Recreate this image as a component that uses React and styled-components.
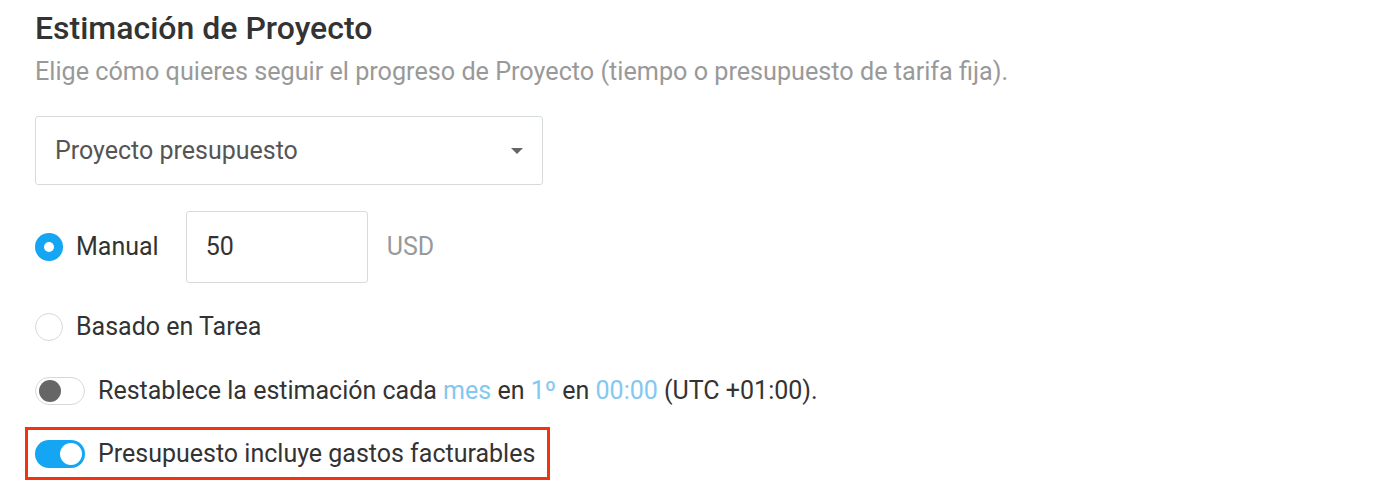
import React from "react";
import styled, { createGlobalStyle } from "styled-components";

const Global = createGlobalStyle`
  html, body { margin: 0; padding: 0; background: #fff; }
  body { font-family: Roboto, "Liberation Sans", Arial, sans-serif; color: #333; }
  * { box-sizing: border-box; }
`;

const Page = styled.div`
  display: flex;
  flex-direction: column;
  align-items: flex-start;
  padding: 10px 0 0 35px;
`;

const Title = styled.h2`
  margin: 0;
  font-size: 32px;
  line-height: 36px;
  font-weight: 500;
  color: #333;
`;

const Subtitle = styled.p`
  margin: 11px 0 0;
  font-size: 25.2px;
  line-height: 30px;
  color: #999;
`;

const Select = styled.div`
  margin-top: 29px;
  width: 508px;
  height: 69px;
  border: 1px solid #d6dadc;
  border-radius: 3px;
  display: flex;
  align-items: center;
  justify-content: space-between;
  padding: 0 19px 0 19px;
  font-size: 25px;
  color: #555;
`;

const Caret = styled.span`
  width: 0;
  height: 0;
  border-left: 6px solid transparent;
  border-right: 6px solid transparent;
  border-top: 6px solid #666;
`;

const Row = styled.div`
  display: flex;
  align-items: center;
  margin-top: ${(p) => p.$mt}px;
  font-size: 25px;
  line-height: 30px;
  color: #333;
`;

const Radio = styled.span`
  width: 28px;
  height: 28px;
  border-radius: 50%;
  flex: none;
  display: flex;
  align-items: center;
  justify-content: center;
  border: ${(p) => (p.$checked ? "none" : "1px solid #d8d8d8")};
  background: ${(p) => (p.$checked ? "#14a6f2" : "#fff")};
  margin-right: 13px;
  &::after {
    content: "";
    display: ${(p) => (p.$checked ? "block" : "none")};
    width: 10px;
    height: 10px;
    border-radius: 50%;
    background: #fff;
  }
`;

const Amount = styled.div`
  margin-left: 27px;
  width: 182px;
  height: 72px;
  border: 1px solid #d6dadc;
  border-radius: 3px;
  display: flex;
  align-items: center;
  padding-left: 19px;
  font-size: 25px;
  color: #333;
`;

const Currency = styled.span`
  margin-left: 19px;
  color: #999;
  font-size: 25px;
`;

const Toggle = styled.span`
  width: 50px;
  height: 28px;
  border-radius: 14px;
  flex: none;
  display: flex;
  align-items: center;
  justify-content: ${(p) => (p.$on ? "flex-end" : "flex-start")};
  padding: 0 3px;
  background: ${(p) => (p.$on ? "#14a6f2" : "#fff")};
  border: ${(p) => (p.$on ? "none" : "1px solid #d8d8d8")};
  margin-right: 13px;
  &::after {
    content: "";
    width: 22px;
    height: 22px;
    border-radius: 50%;
    background: ${(p) => (p.$on ? "#fff" : "#666")};
  }
`;

const Link = styled.span`
  color: #82c8f0;
`;

const Highlight = styled.div`
  margin-top: 21px;
  margin-left: -10px;
  display: inline-flex;
  align-items: center;
  border: 3px solid #f2330f;
  padding: 10px 12px 9px 7px;
  font-size: 25px;
  line-height: 28px;
  color: #333;
`;

export default function App() {
  return (
    <>
      <Global />
      <Page>
        <Title>Estimación de Proyecto</Title>
        <Subtitle>
          Elige cómo quieres seguir el progreso de Proyecto (tiempo o presupuesto de tarifa fija).
        </Subtitle>
        <Select>
          <span>Proyecto presupuesto</span>
          <Caret />
        </Select>
        <Row $mt={26}>
          <Radio $checked />
          <span>Manual</span>
          <Amount>50</Amount>
          <Currency>USD</Currency>
        </Row>
        <Row $mt={29}>
          <Radio />
          <span>Basado en Tarea</span>
        </Row>
        <Row $mt={34}>
          <Toggle />
          <span>
            Restablece la estimación cada <Link>mes</Link> en <Link>1º</Link> en{" "}
            <Link>00:00</Link> (UTC +01:00).
          </span>
        </Row>
        <Highlight>
          <Toggle $on />
          <span>Presupuesto incluye gastos facturables</span>
        </Highlight>
      </Page>
    </>
  );
}
